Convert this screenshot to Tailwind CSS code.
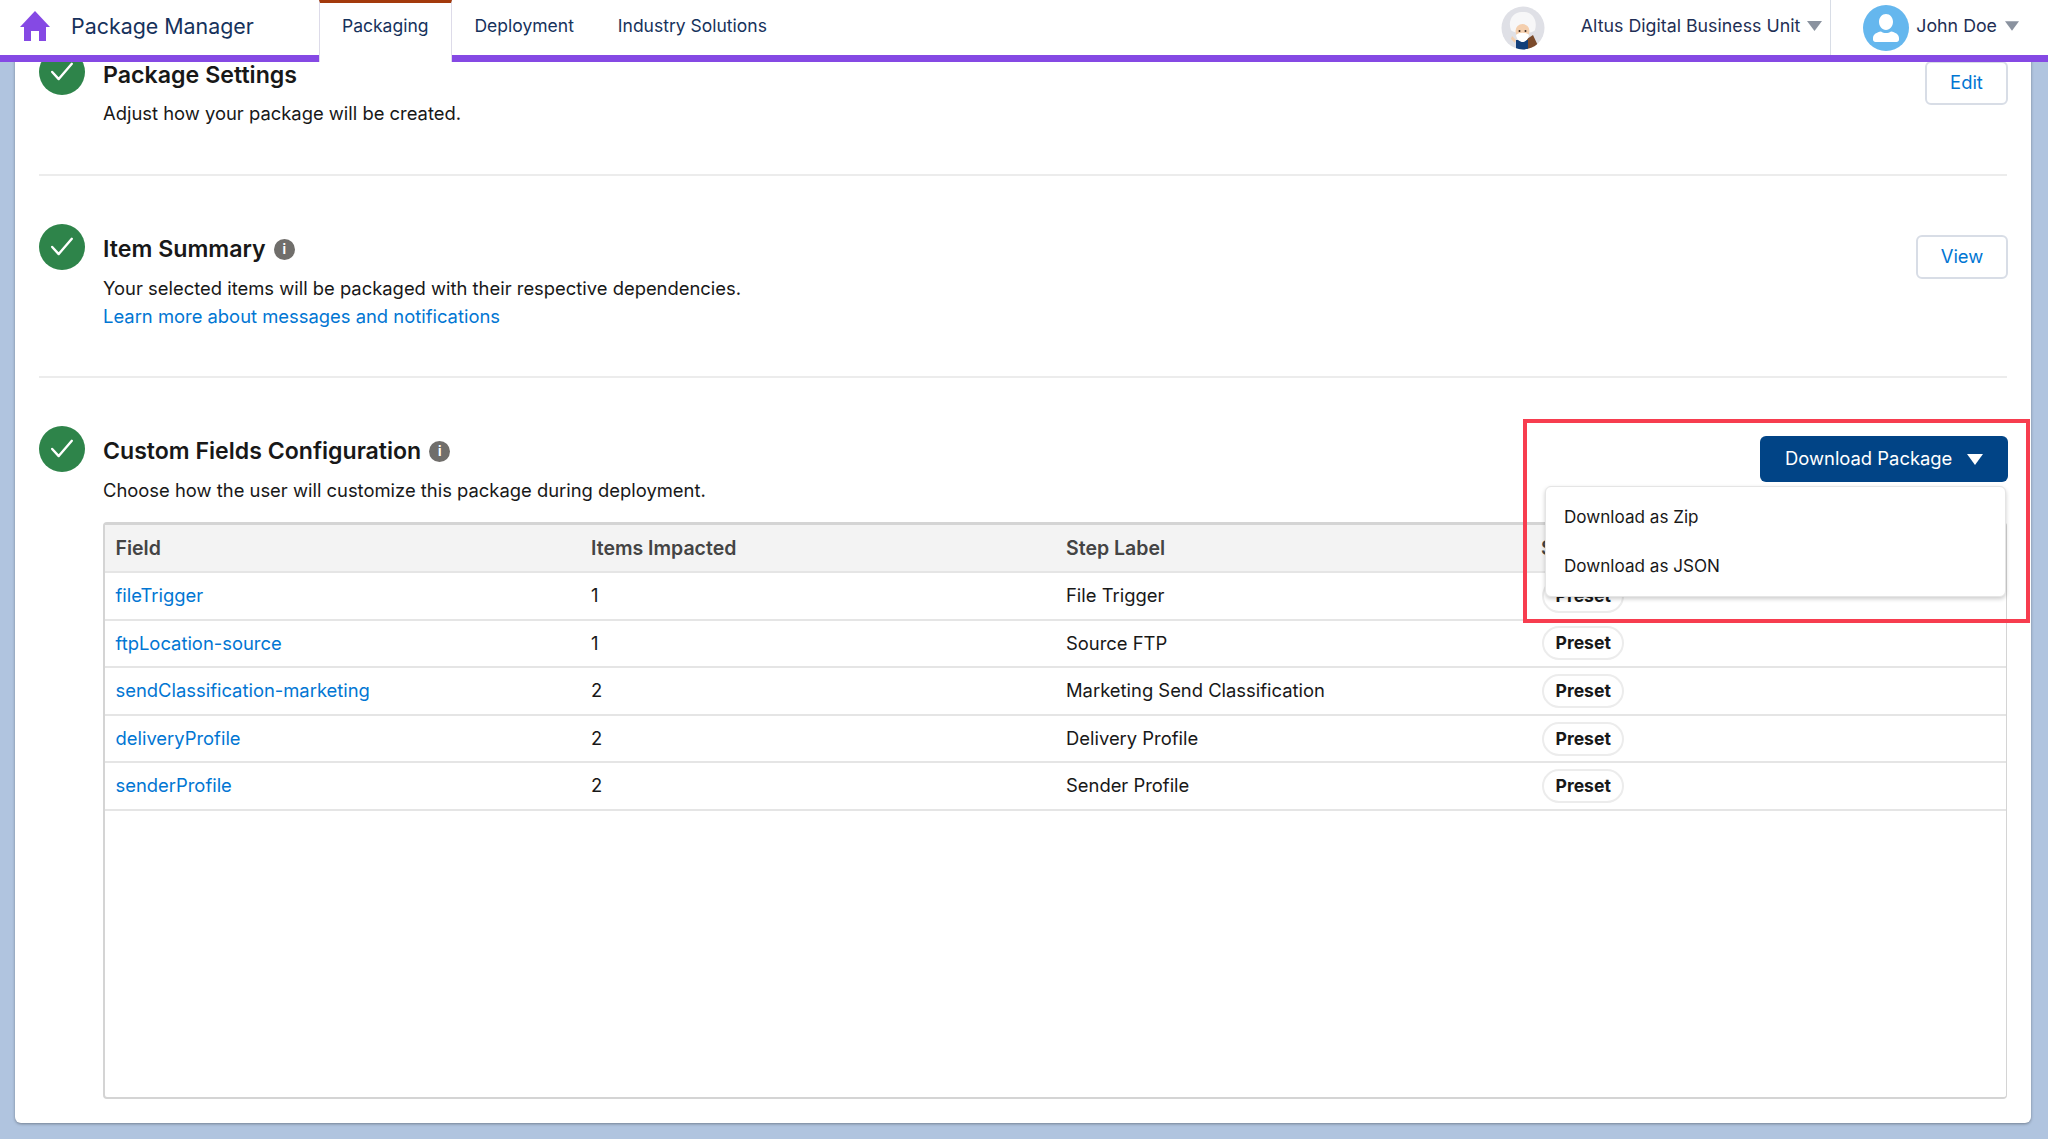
<!DOCTYPE html>
<html lang="en">
<head>
    <meta charset="UTF-8">
    <title>Package Manager</title>
    <script src="https://cdn.jsdelivr.net/npm/@tailwindcss/browser@4"></script>
</head>
<body class="bg-[#b0c4df] h-[1139px] overflow-hidden font-['Inter',sans-serif] text-[18.400px] text-[#181818]">

    <!-- Header -->
    <header class="relative z-10 h-[62px] bg-white border-b-[7px] border-[#8549e4] flex items-start text-[#16325c]">
        <div class="w-[319px] h-[52px] flex items-center">
            <svg class="ml-[20px] w-[30px] h-[30px]" viewBox="0 0 30 30"><path fill="#8549e4" d="M15 0 30 16h-4v14h-7V20h-8v10H4V16H0z"/></svg>
            <span class="ml-[21px] text-[21.400px]">Package Manager</span>
        </div>
        <nav class="flex text-[17.500px]">
            <a class="h-[62px] pl-[22px] pr-[23px] pb-[12px] flex items-center bg-white border-x border-[#dddbe9] border-t-[3px] border-t-[#a33a0c]">Packaging</a>
            <a class="h-[52px] px-[22px] flex items-center">Deployment</a>
            <a class="h-[52px] px-[22px] flex items-center">Industry Solutions</a>
        </nav>
        <div class="ml-auto h-[55px] flex items-center text-[#1f2f55]">
            <svg class="w-[44px] h-[44px] mr-[36px]" viewBox="0 0 44 44">
                <clipPath id="astro"><circle cx="22" cy="22" r="21.500"/></clipPath>
                <g clip-path="url(#astro)">
                    <rect width="44" height="44" fill="#dfe0e6"/>
                    <path fill="#f7f7f8" d="M10 24C6 14 13 5 22 6c9-1 15 8 12 18-2 4-22 4-24 0z"/>
                    <path fill="#7a4a2b" d="M26 44V33l6-4 7 15z"/>
                    <path fill="#123f7a" d="M15 44V34h12v10z"/>
                    <circle cx="21.500" cy="25" r="7" fill="#f4cfae"/>
                    <path fill="#ffffff" d="M15 29c3-3 10-3 13 0-1 5-4 7-6.500 7S16 34 15 29z"/>
                    <path fill="#f4cfae" d="M11 30l4 4-1 3-4-4z"/>
                    <circle cx="18.500" cy="25" r="1" fill="#3a2a20"/>
                    <circle cx="24.500" cy="25" r="1" fill="#3a2a20"/>
                </g>
            </svg>
            <span class="text-[17.800px] pb-[3px]">Altus Digital Business Unit</span>
            <svg class="w-[15px] h-[10px] ml-[7px] mr-[8px] mb-[3px]" viewBox="0 0 15 10"><path fill="#8a929f" d="M0 0h15L7.500 10z"/></svg>
            <div class="h-[55px] border-l border-[#d8dde6] pl-[32px] flex items-center pr-[29px]">
                <span class="w-[46px] h-[46px] rounded-full bg-[#65b7ee] flex items-center justify-center mr-[7px]">
                    <svg class="w-[26px] h-[28px]" viewBox="0 0 26 28"><path fill="#fff" d="M13 0c4 0 7 3.400 7 7.800S17 16 13 16 6 12.200 6 7.800 9 0 13 0zM8 17.500c1.500 1 3.200 1.500 5 1.500s3.500-.5 5-1.500c4 .8 8 2.700 8 6.500v1.500c0 1.400-1 2.500-2.500 2.500h-21C1 28 0 26.900 0 25.500V24c0-3.800 4-5.700 8-6.500z"/></svg>
                </span>
                <span class="text-[17.800px] pb-[3px]">John Doe</span>
                <svg class="w-[14px] h-[10px] ml-[8px] mb-[3px]" viewBox="0 0 15 10"><path fill="#8a929f" d="M0 0h15L7.500 10z"/></svg>
            </div>
        </div>
    </header>

    <!-- Contenido -->
    <main class="relative mx-[15px] mt-[-42px] h-[1103px] w-[2016px] bg-white rounded-md shadow-[0_1px_3px_rgba(0,0,0,0.35)] px-[24px] pt-[29px]">

        <!-- Package Settings -->
        <section class="h-[127px] flex border-b-2 border-[#ececec]">
            <span class="w-[46px] h-[46px] mr-[18px] rounded-full bg-[#2e844a] flex items-center justify-center shrink-0">
                <svg class="w-[24px] h-[24px]" viewBox="0 0 22 22"><path fill="none" stroke="#fff" stroke-width="2.200" stroke-linecap="round" stroke-linejoin="round" d="M2 11 8 17.500 20 3.500"/></svg>
            </span>
            <div class="flex-1">
                <h2 class="mt-[10px] text-[23.200px] leading-[32px] font-semibold">Package Settings</h2>
                <p class="mt-[8px] leading-[28px]">Adjust how your package will be created.</p>
            </div>
            <a class="mt-[12px] w-[83px] h-[44px] -mr-[1px] rounded-md border-2 border-[#d8dde6] flex items-center justify-center text-[#0176d3]">Edit</a>
        </section>

        <!-- Item Summary -->
        <section class="pt-[48px] h-[202px] flex border-b-2 border-[#ececec]">
            <span class="w-[46px] h-[46px] mr-[18px] rounded-full bg-[#2e844a] flex items-center justify-center shrink-0">
                <svg class="w-[24px] h-[24px]" viewBox="0 0 22 22"><path fill="none" stroke="#fff" stroke-width="2.200" stroke-linecap="round" stroke-linejoin="round" d="M2 11 8 17.500 20 3.500"/></svg>
            </span>
            <div class="flex-1">
                <h2 class="mt-[9px] text-[23.200px] leading-[32px] font-semibold flex items-center">
                    Item Summary
                    <span class="ml-[8px] w-[21px] h-[21px] rounded-full bg-[#706e6b] text-white text-[13px] font-bold flex items-center justify-center">i</span>
                </h2>
                <p class="mt-[9px] leading-[28px]">Your selected items will be packaged with their respective dependencies.</p>
                <a class="leading-[28px] text-[#0176d3]">Learn more about messages and notifications</a>
            </div>
            <a class="mt-[11px] w-[92px] h-[44px] -mr-[1px] rounded-md border-2 border-[#d8dde6] flex items-center justify-center text-[#0176d3]">View</a>
        </section>

        <!-- Custom Fields Configuration -->
        <section class="pt-[48px] flex">
            <span class="w-[46px] h-[46px] mr-[18px] rounded-full bg-[#2e844a] flex items-center justify-center shrink-0">
                <svg class="w-[24px] h-[24px]" viewBox="0 0 22 22"><path fill="none" stroke="#fff" stroke-width="2.200" stroke-linecap="round" stroke-linejoin="round" d="M2 11 8 17.500 20 3.500"/></svg>
            </span>
            <div class="flex-1 relative">
                <div class="h-[96px] flex justify-between items-start">
                    <div>
                        <h2 class="mt-[9px] text-[23.100px] leading-[32px] font-semibold flex items-center">
                            Custom Fields Configuration
                            <span class="ml-[8px] w-[21px] h-[21px] rounded-full bg-[#706e6b] text-white text-[13px] font-bold flex items-center justify-center">i</span>
                        </h2>
                        <p class="mt-[9px] leading-[28px]">Choose how the user will customize this package during deployment.</p>
                    </div>
                    <button class="mt-[10px] w-[248px] h-[46px] -mr-[1px] rounded-md bg-[#014486] text-white flex items-center pl-[25px]">
                        Download Package
                        <svg class="ml-[15px] w-[16px] h-[11px]" viewBox="0 0 16 11"><path fill="#fff" d="M0 0h16L8 11z"/></svg>
                    </button>
                </div>

                <div class="h-[577px] border-2 border-t-[3px] border-[#d4d4d4] border-r rounded-sm">
                    <table class="w-full table-fixed border-collapse">
                        <thead>
                            <tr class="h-[47px] bg-[#f3f3f3] border-b-2 border-[#e5e5e5] text-left text-[#444] text-[19.500px]">
                                <th class="w-[475px] pl-[10.500px] pt-[2px] font-semibold">Field</th>
                                <th class="w-[475px] pl-[11px] pt-[2px] font-semibold">Items Impacted</th>
                                <th class="w-[475px] pl-[11px] pt-[2px] font-semibold">Step Label</th>
                                <th class="pl-[11px] pt-[2px] font-semibold">Status</th>
                            </tr>
                        </thead>
                        <tbody>
                            <tr class="h-[47.600px] border-b-2 border-[#e5e5e5]">
                                <td class="pl-[10.500px] text-[#0176d3]">fileTrigger</td>
                                <td class="pl-[11px]">1</td>
                                <td class="pl-[11px]">File Trigger</td>
                                <td class="pl-[12px]"><span class="inline-block px-[11.500px] leading-[30px] rounded-full border-2 border-[#ececec] text-[17.600px] font-bold">Preset</span></td>
                            </tr>
                            <tr class="h-[47.600px] border-b-2 border-[#e5e5e5]">
                                <td class="pl-[10.500px] text-[#0176d3]">ftpLocation-source</td>
                                <td class="pl-[11px]">1</td>
                                <td class="pl-[11px]">Source FTP</td>
                                <td class="pl-[12px]"><span class="inline-block px-[11.500px] leading-[30px] rounded-full border-2 border-[#ececec] text-[17.600px] font-bold">Preset</span></td>
                            </tr>
                            <tr class="h-[47.600px] border-b-2 border-[#e5e5e5]">
                                <td class="pl-[10.500px] text-[#0176d3]">sendClassification-marketing</td>
                                <td class="pl-[11px]">2</td>
                                <td class="pl-[11px]">Marketing Send Classification</td>
                                <td class="pl-[12px]"><span class="inline-block px-[11.500px] leading-[30px] rounded-full border-2 border-[#ececec] text-[17.600px] font-bold">Preset</span></td>
                            </tr>
                            <tr class="h-[47.600px] border-b-2 border-[#e5e5e5]">
                                <td class="pl-[10.500px] text-[#0176d3]">deliveryProfile</td>
                                <td class="pl-[11px]">2</td>
                                <td class="pl-[11px]">Delivery Profile</td>
                                <td class="pl-[12px]"><span class="inline-block px-[11.500px] leading-[30px] rounded-full border-2 border-[#ececec] text-[17.600px] font-bold">Preset</span></td>
                            </tr>
                            <tr class="h-[47.600px] border-b-2 border-[#e5e5e5]">
                                <td class="pl-[10.500px] text-[#0176d3]">senderProfile</td>
                                <td class="pl-[11px]">2</td>
                                <td class="pl-[11px]">Sender Profile</td>
                                <td class="pl-[12px]"><span class="inline-block px-[11.500px] leading-[30px] rounded-full border-2 border-[#ececec] text-[17.600px] font-bold">Preset</span></td>
                            </tr>
                        </tbody>
                    </table>
                </div>

                <!-- Menu desplegable -->
                <div class="absolute left-[1442px] top-[60px] w-[461px] h-[111px] bg-white rounded-md border border-[#e5e5e5] shadow-[0_2px_4px_rgba(0,0,0,0.2)] pl-[18px] pt-[5px] text-[17.100px]">
                    <p class="h-[49px] flex items-center">Download as Zip</p>
                    <p class="h-[49px] flex items-center">Download as JSON</p>
                </div>
            </div>
        </section>

        <!-- Recuadro rojo -->
        <div class="absolute left-[1508px] top-[399px] w-[507px] h-[204px] border-4 border-[#f73d4f]"></div>
    </main>

</body>
</html>
